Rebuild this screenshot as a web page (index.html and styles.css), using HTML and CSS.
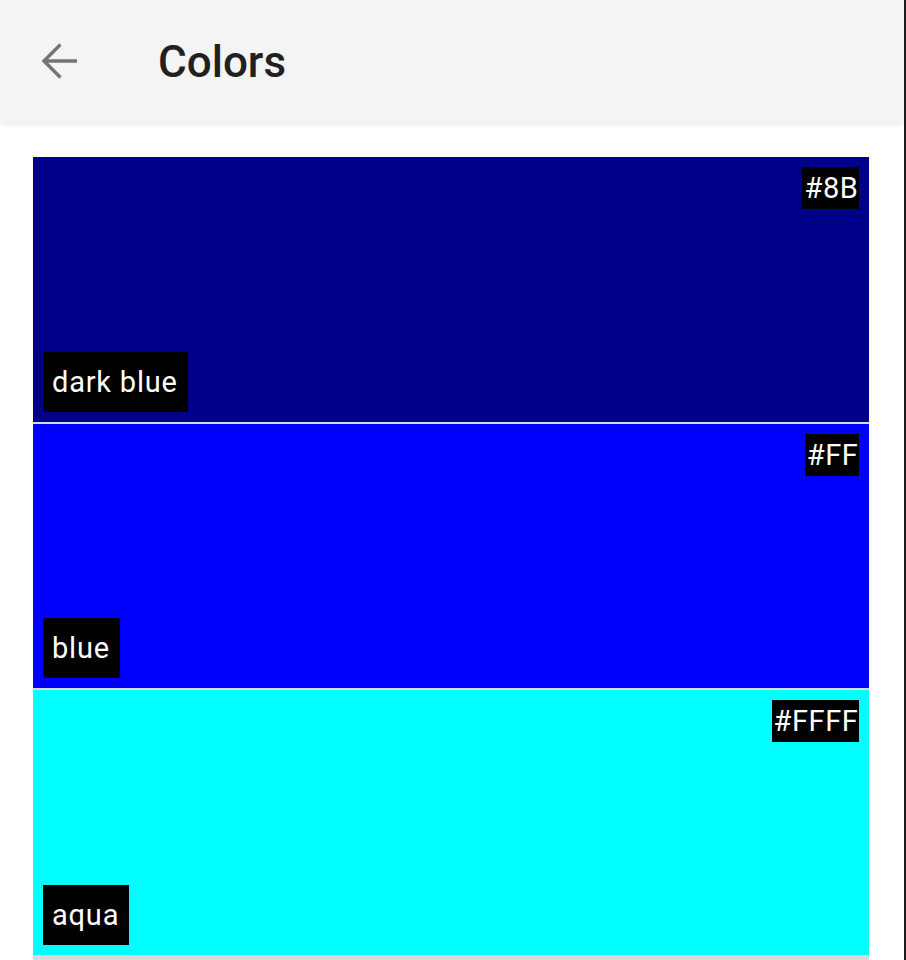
FILE: index.html
```html
<!DOCTYPE html>
<html>
<head>
<meta charset="utf-8">
<link rel="stylesheet" href="styles.css">
</head>
<body>
<div class="screen">
  <header class="appbar">
    <svg class="back" width="36" height="36" viewBox="0 0 36 36" aria-hidden="true">
      <path d="M2 18H35" fill="none" stroke="#757575" stroke-width="3.4"/>
      <path d="M18.5 1.5L2 18L18.5 34.5" fill="none" stroke="#757575" stroke-width="3.4"/>
    </svg>
    <h1 class="title">Colors</h1>
  </header>
  <main class="content">
    <div class="list">
      <div class="swatch dark-blue">
        <span class="hex">#8B</span>
        <span class="name">dark blue</span>
      </div>
      <div class="swatch blue">
        <span class="hex">#FF</span>
        <span class="name">blue</span>
      </div>
      <div class="swatch aqua">
        <span class="hex">#FFFF</span>
        <span class="name">aqua</span>
      </div>
    </div>
  </main>
</div>
</body>
</html>
```

FILE: styles.css
```css
html, body {
  margin: 0;
  padding: 0;
  background: #ffffff;
}

body {
  font-family: Roboto, "Noto Sans", "Liberation Sans", sans-serif;
}

.screen {
  width: 904px;
  height: 960px;
  border-right: 2px solid #1c1c1c;
  overflow: hidden;
  background: #ffffff;
}

.appbar {
  height: 122px;
  background: #f4f4f4;
  display: flex;
  align-items: center;
  padding-left: 42px;
  box-shadow: 0 2px 6px rgba(0, 0, 0, 0.09);
  position: relative;
  z-index: 1;
}

.back {
  display: block;
  flex: none;
}

.title {
  margin: 2px 0 0 80px;
  font-size: 44px;
  font-weight: 500;
  color: #212121;
  line-height: 1;
}

.content {
  padding: 35px 35px 0 33px;
}

.list {
  display: flex;
  flex-direction: column;
  gap: 2px;
  background: #d9d9d9;
  padding-bottom: 10px;
}

.swatch {
  height: 264.67px;
  box-sizing: border-box;
  padding: 10px;
  display: flex;
  flex-direction: column;
  justify-content: space-between;
}

.dark-blue { background: #00008b; }
.blue { background: #0000ff; }
.aqua { background: #00ffff; }

.hex {
  align-self: flex-end;
  background: #000000;
  color: #ffffff;
  font-size: 29px;
  letter-spacing: 0.6px;
  line-height: 42px;
  padding: 0 0.5px 0 2px;
}

.name {
  align-self: flex-start;
  background: #000000;
  color: #ffffff;
  font-size: 29px;
  letter-spacing: 0.8px;
  line-height: 40px;
  padding: 10px 10px 10px 9px;
}
```
